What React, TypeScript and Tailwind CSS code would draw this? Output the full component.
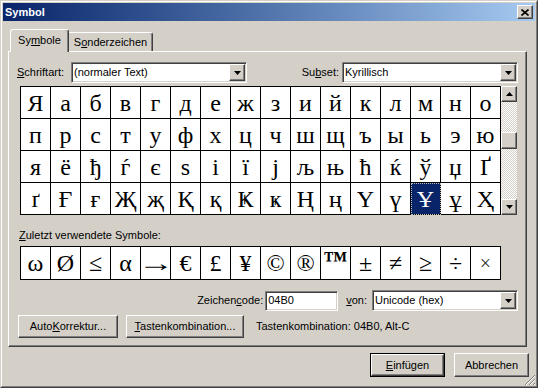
import React from "react"

const raised =
  "border border-t-white border-l-white border-r-[#404040] border-b-[#404040] shadow-[inset_-1px_-1px_#808080]"
const sunken =
  "border border-t-[#808080] border-l-[#808080] border-r-white border-b-white shadow-[inset_1px_1px_#404040,inset_-1px_-1px_#d4d0c8]"

const rows = [
  ["Я", "а", "б", "в", "г", "д", "е", "ж", "з", "и", "й", "к", "л", "м", "н", "о"],
  ["п", "р", "с", "т", "у", "ф", "х", "ц", "ч", "ш", "щ", "ъ", "ы", "ь", "э", "ю"],
  ["я", "ё", "ђ", "ѓ", "є", "ѕ", "і", "ї", "ј", "љ", "њ", "ћ", "ќ", "ў", "џ", "Ґ"],
  ["ґ", "Ғ", "ғ", "Җ", "җ", "Қ", "қ", "Ҝ", "ҝ", "Ң", "ң", "Ү", "ү", "Ұ", "ұ", "Ҳ"],
]

const recent = ["ω", "Ø", "≤", "α", "→", "€", "£", "¥", "©", "®", "™", "±", "≠", "≥", "÷", "×"]

function DownArrow() {
  return (
    <svg width="7" height="4" viewBox="0 0 7 4">
      <path d="M0 0h7L3.5 4z" fill="black" />
    </svg>
  )
}

function UpArrow() {
  return (
    <svg width="7" height="4" viewBox="0 0 7 4">
      <path d="M0 4h7L3.5 0z" fill="black" />
    </svg>
  )
}

function Combo({ value, className = "" }: { value: string; className?: string }) {
  return (
    <div className={`${sunken} h-[21px] bg-white flex p-px ${className}`}>
      <div className="flex-1 pl-px leading-[17px] truncate">{value}</div>
      <div className={`${raised} w-[16px] h-[17px] bg-[#d4d0c8] flex items-center justify-center`}>
        <DownArrow />
      </div>
    </div>
  )
}

function Button({ children, className = "" }: { children: React.ReactNode; className?: string }) {
  return (
    <div className={`${raised} bg-[#d4d0c8] flex items-center justify-center ${className}`}>{children}</div>
  )
}

export default function App() {
  return (
    <div className="w-[538px] h-[388px] bg-[#d4d0c8] border border-t-[#d4d0c8] border-l-[#d4d0c8] border-r-[#404040] border-b-[#404040] font-['Liberation_Sans',Arial,sans-serif] text-[11px] text-black">
      <div className="relative h-full border border-t-white border-l-white border-r-[#808080] border-b-[#808080] p-px">
        {/* title bar */}
        <div className="h-[18px] flex items-center justify-between bg-linear-to-r from-[#0a246a] to-[#a6caf0]">
          <span className="pl-[2px] font-bold text-white text-[11px]">Symbol</span>
          <div className={`${raised} w-[16px] h-[14px] mr-[2px] bg-[#d4d0c8] flex items-center justify-center`}>
            <svg width="8" height="7" viewBox="0 0 8 7">
              <path d="M0.5 0.5l7 6M7.5 0.5l-7 6" stroke="black" strokeWidth="1.6" />
            </svg>
          </div>
        </div>

        <div className="pt-[8px] pl-[5px]">
          {/* tabs */}
          <div className="h-[22px] flex items-end pl-[2px]">
            <div className="relative z-10 -mb-px w-[59px] h-[23px] bg-[#d4d0c8] border-l border-t border-r border-l-white border-t-white border-r-[#404040] shadow-[inset_-1px_0_#808080] rounded-t-[3px] flex items-center justify-center pb-[2px]">
              <span>
                Sy<u>m</u>bole
              </span>
            </div>
            <div className="w-[84px] h-[19px] bg-[#d4d0c8] border-t border-r border-t-white border-r-[#404040] shadow-[inset_-1px_0_#808080] rounded-tr-[3px] flex items-center justify-center">
              <span>
                S<u>o</u>nderzeichen
              </span>
            </div>
          </div>

          {/* panel */}
          <div className="w-[519px] h-[296px] border border-t-white border-l-white border-r-[#404040] border-b-[#404040] shadow-[inset_-1px_-1px_#808080]">
            <div className="pt-[10px] pl-[8px] pr-[8px] flex items-center">
              <span className="w-[54px]">
                <u>S</u>chriftart:
              </span>
              <Combo value="(normaler Text)" className="w-[176px]" />
              <span className="flex-1 text-right pr-[3px]">
                Su<u>b</u>set:
              </span>
              <Combo value="Kyrillisch" className="w-[176px]" />
            </div>

            {/* symbol grid */}
            <div className="mt-[3px] ml-[11px] flex">
              <div className="grid grid-cols-[repeat(16,30px)] border-l border-t border-black bg-white font-['Liberation_Serif','DejaVu_Serif',serif] text-[24px]">
                {rows.flat().map((ch, i) => {
                  const sel = ch === "Ұ"
                  return (
                    <div
                      key={i}
                      className={`h-[32px] border-r border-b border-black flex items-center justify-center leading-none ${
                        sel ? "bg-[#0a246a] text-white outline-1 outline-dotted outline-[#c0c0c0] -outline-offset-1" : ""
                      }`}
                    >
                      {ch}
                    </div>
                  )
                })}
              </div>
              <div className="w-[16px] flex flex-col">
                <div className={`${raised} h-[16px] bg-[#d4d0c8] flex items-center justify-center`}>
                  <UpArrow />
                </div>
                <div className="h-[30px] bg-[conic-gradient(#fff_25%,#d4d0c8_0_50%,#fff_0_75%,#d4d0c8_0)] bg-[length:2px_2px]" />
                <div className={`${raised} h-[17px] bg-[#d4d0c8]`} />
                <div className="flex-1 bg-[conic-gradient(#fff_25%,#d4d0c8_0_50%,#fff_0_75%,#d4d0c8_0)] bg-[length:2px_2px]" />
                <div className={`${raised} h-[16px] bg-[#d4d0c8] flex items-center justify-center`}>
                  <DownArrow />
                </div>
              </div>
            </div>

            <div className="mt-[14px] pl-[10px] h-[13px] leading-[13px]">
              <u>Z</u>uletzt verwendete Symbole:
            </div>

            <div className="mt-[4px] ml-[11px] w-fit grid grid-cols-[repeat(16,30px)] border-l border-t border-black bg-white font-['Liberation_Serif','DejaVu_Serif',serif] text-[24px]">
              {recent.map((ch, i) => (
                <div key={i} className="h-[33px] border-r border-b border-black flex items-center justify-center leading-none">
                  {ch === "→" ? (
                    <span className="inline-block scale-x-[1.5]">{ch}</span>
                  ) : ch === "×" ? (
                    <span className="text-[20px] text-[#333]">{ch}</span>
                  ) : ch === "™" ? (
                    <span className="-mt-[6px] font-bold">{ch}</span>
                  ) : (
                    ch
                  )}
                </div>
              ))}
            </div>

            <div className="mt-[10px] pr-[8px] flex items-center justify-end">
              <span>
                Zeichen<u>c</u>ode:
              </span>
              <div className={`${sunken} ml-[2px] w-[73px] h-[20px] bg-white pl-[2px] leading-[16px]`}>04B0</div>
              <span className="ml-[8px]">
                <u>v</u>on:
              </span>
              <Combo value="Unicode (hex)" className="ml-[5px] w-[146px]" />
            </div>

            <div className="mt-[4px] pl-[9px] flex items-center">
              <Button className="w-[100px] h-[23px]">
                <span>
                  Auto<u>K</u>orrektur...
                </span>
              </Button>
              <Button className="ml-[8px] w-[118px] h-[23px]">
                <span>
                  <u>T</u>astenkombination...
                </span>
              </Button>
              <span className="ml-[12px]">Tastenkombination: 04B0, Alt-C</span>
            </div>
          </div>
        </div>

        {/* dialog buttons */}
        <div className="mt-[6px] pr-[6px] flex justify-end gap-[9px]">
          <div className="w-[75px] h-[24px] border border-black">
            <Button className="w-full h-full">
              <span>
                <u>E</u>infügen
              </span>
            </Button>
          </div>
          <Button className="w-[75px] h-[24px]">Abbrechen</Button>
        </div>

        <svg className="absolute right-0 bottom-0" width="12" height="12" viewBox="0 0 12 12">
          <path d="M11 1L1 11M11 5L5 11M11 9L9 11" stroke="#808080" strokeWidth="1" />
          <path d="M11 2L2 11M11 6L6 11M11 10L10 11" stroke="white" strokeWidth="1" />
        </svg>
      </div>
    </div>
  )
}
